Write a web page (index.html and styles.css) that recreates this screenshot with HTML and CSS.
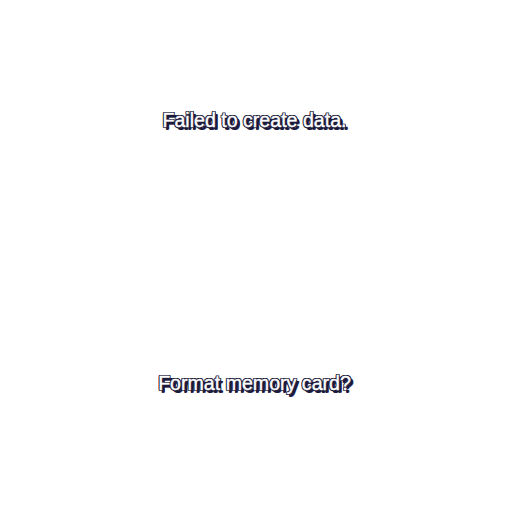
FILE: index.html
```html
<!DOCTYPE html>
<html>
<head>
<meta charset="utf-8">
<link rel="stylesheet" href="styles.css">
</head>
<body>
<div class="screen">
  <div class="msg msg-top">Failed to create data.</div>
  <div class="msg msg-bottom">Format memory card?</div>
</div>
</body>
</html>
```
FILE: styles.css
```css
html, body {
  margin: 0;
  padding: 0;
  background: #ffffff;
}
.screen {
  width: 509px;
  height: 512px;
  padding-right: 3px;
  display: flex;
  flex-direction: column;
  align-items: center;
}
.msg {
  font-family: "Liberation Sans", Arial, sans-serif;
  font-size: 19.6px;
  line-height: 22px;
  color: #ffffff;
  -webkit-text-stroke: 0.4px #ffffff;
  text-shadow:
    -1px -1px 0 #1c1a3a, 0 -1px 0 #1c1a3a, 1px -1px 0 #1c1a3a,
    -1px 0 0 #1c1a3a, 1px 0 0 #1c1a3a,
    -1px 1px 0 #1c1a3a, 0 1px 0 #1c1a3a, 1px 1px 0 #1c1a3a,
    2px 2px 0 #1c1a3a, 2px 3px 0 #1c1a3a, 3px 2px 0 #1c1a3a,
    3px 3px 0 #6c6890;
}
.msg-top {
  margin-top: 109px;
}
.msg-bottom {
  margin-top: 241px;
}
```
